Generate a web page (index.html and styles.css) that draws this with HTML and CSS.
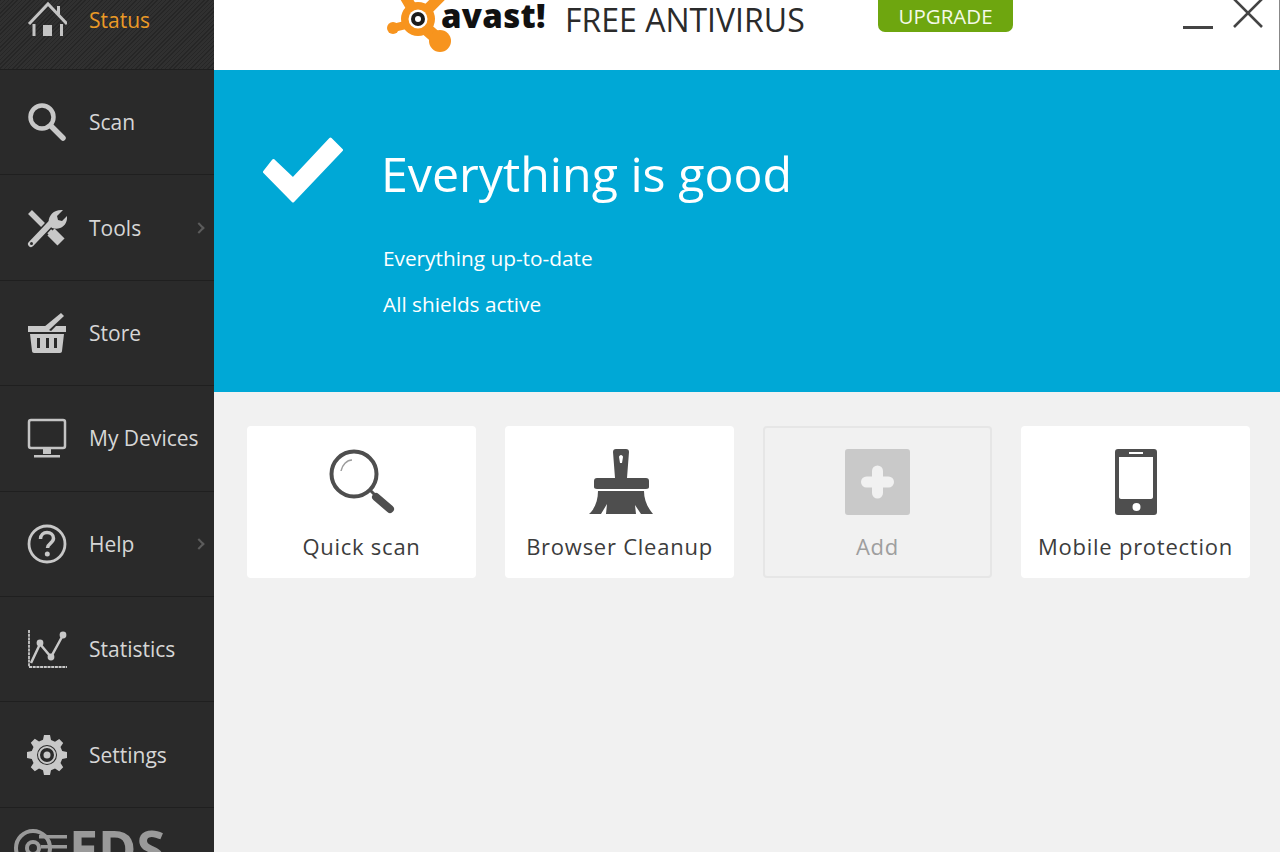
FILE: index.html
```html
<!DOCTYPE html>
<html lang="en">
<head>
<meta charset="utf-8">
<title>avast! Free Antivirus</title>
<link rel="stylesheet" href="styles.css">
</head>
<body>
<div class="app">
  <nav class="sidebar">
    <a class="nav-item nav-status">
      <svg class="nav-icon" viewBox="0 0 40 40"><path d="M2 24 21 4l19 20" fill="none" stroke="#c4c4c4" stroke-width="3"/><path d="M30 6h3v8h-3z" fill="#c4c4c4"/><path d="M5.500 24h3v12h-3zM33 24h3v12h-3zM16 25h9v11h-9z" fill="#c4c4c4"/></svg>
      <span class="nav-label nav-label-active">Status</span>
    </a>
    <a class="nav-item">
      <svg class="nav-icon" viewBox="0 0 40 40"><circle cx="15" cy="15" r="11.500" fill="none" stroke="#c8c8c8" stroke-width="4.500"/><path d="M25 25 36 36" stroke="#c8c8c8" stroke-width="5.500" stroke-linecap="round"/></svg>
      <span class="nav-label">Scan</span>
    </a>
    <a class="nav-item">
      <svg class="nav-icon" viewBox="0 0 40 40"><path d="M3 4 24 25" stroke="#c8c8c8" stroke-width="5.500"/><path d="M24 24 34 34" stroke="#c8c8c8" stroke-width="10"/><path d="M4 36 24 15" stroke="#2a2a2a" stroke-width="9"/><path d="M4 36 24 15" stroke="#c8c8c8" stroke-width="6" stroke-linecap="round"/><path d="M22 17c-2-8 4-16 14-15l-6 6 1 4 4 1 5-5c1 9-7 15-15 12z" fill="#c8c8c8"/><circle cx="4.500" cy="35.500" r="1.500" fill="#2a2a2a"/></svg>
      <span class="nav-label">Tools</span>
      <span class="nav-chevron"></span>
    </a>
    <a class="nav-item">
      <svg class="nav-icon" viewBox="0 0 40 40"><path d="M1 13h21l-2 3 4 2 5-5h10v6H1z" fill="#c8c8c8"/><path d="m17 14 17-14 3 3-16 15z" fill="#c8c8c8"/><path fill-rule="evenodd" d="M3 21h34l-2 17c0 1-1 2-2 2H7c-1 0-2-1-2-2zm7 4v10h3V25zm9 0v10h3V25zm8 0v10h3V25z" fill="#c8c8c8"/></svg>
      <span class="nav-label">Store</span>
    </a>
    <a class="nav-item">
      <svg class="nav-icon" viewBox="0 0 40 40"><rect x="2" y="2" width="36" height="28" rx="2" fill="none" stroke="#c4c4c4" stroke-width="2.500"/><path d="M16 31h8v5h-8z" fill="#c4c4c4"/><path d="M7 37h26v2.500H7z" fill="#c4c4c4"/></svg>
      <span class="nav-label">My Devices</span>
    </a>
    <a class="nav-item">
      <svg class="nav-icon" viewBox="0 0 40 40"><circle cx="20" cy="20" r="18" fill="none" stroke="#c8c8c8" stroke-width="2.800"/><path d="M13.500 15c0-4 3-6.500 6.500-6.500s6.500 2.300 6.500 5.800c0 5-6 5-6 9.700" fill="none" stroke="#c8c8c8" stroke-width="3.500"/><circle cx="20.300" cy="30" r="2.500" fill="#c8c8c8"/></svg>
      <span class="nav-label">Help</span>
      <span class="nav-chevron"></span>
    </a>
    <a class="nav-item">
      <svg class="nav-icon" viewBox="0 0 40 40"><path d="M2 1v37h38" fill="none" stroke="#c8c8c8" stroke-width="1.800" stroke-dasharray="3 .7"/><path d="M4 34 13 15l11 13L36 6" fill="none" stroke="#c8c8c8" stroke-width="2.500"/><circle cx="13" cy="14" r="3.400" fill="#c8c8c8"/><circle cx="24" cy="28" r="3.400" fill="#c8c8c8"/><circle cx="36" cy="6" r="3.400" fill="#c8c8c8"/></svg>
      <span class="nav-label">Statistics</span>
    </a>
    <a class="nav-item">
      <svg class="nav-icon" viewBox="0 0 40 40"><path fill-rule="evenodd" d="M17 0h6l1 5 4 1.700 4.200-2.700 4 4L33.500 12l1.700 4L40 17v6l-4.800 1-1.700 4 2.700 4.200-4 4L28 33.500l-4 1.700L23 40h-6l-1-4.800-4-1.700L7.800 36.200l-4-4L6.500 28l-1.700-4L0 23v-6l4.800-1 1.700-4L3.800 7.800l4-4L12 6.500l4-1.700zM20 10a10 10 0 1 0 0 20 10 10 0 0 0 0-20z" fill="#c8c8c8"/><circle cx="20" cy="20" r="8" fill="none" stroke="#c8c8c8" stroke-width="2"/><circle cx="20" cy="20" r="3.500" fill="#c8c8c8"/></svg>
      <span class="nav-label">Settings</span>
    </a>
    <div class="eds">
      <svg class="eds-mark" viewBox="0 0 56 40"><circle cx="20" cy="20" r="17" fill="none" stroke="#9a9a9a" stroke-width="4"/><circle cx="20" cy="20" r="6" fill="none" stroke="#9a9a9a" stroke-width="4"/><path d="M26 7h28v3.500H26zM28 17h26v3.500H28z" fill="#9a9a9a"/></svg>
      <span class="eds-text">EDS</span>
    </div>
  </nav>
  <div class="content">
    <header class="topbar">
      <div class="brand">
        <svg class="splat" viewBox="0 0 66 66"><g fill="none" stroke="#f7941e" stroke-linecap="round"><path d="M33 32 8 38" stroke-width="8"/><path d="M28 20 18 3" stroke-width="11"/><path d="M40 22 56 6" stroke-width="11"/><path d="M38 36 55 51" stroke-width="13"/></g><g fill="#f7941e"><circle cx="33" cy="29" r="17"/><circle cx="8" cy="38" r="6"/><circle cx="55" cy="51" r="11"/></g><circle cx="33" cy="29" r="9.500" fill="#fff"/><circle cx="33" cy="29" r="7" fill="#1c1c1c"/><circle cx="33" cy="29" r="3" fill="#fff"/></svg>
        <span class="brand-name">avast!</span>
      </div>
      <span class="product">FREE ANTIVIRUS</span>
      <a class="upgrade">UPGRADE</a>
      <div class="window-controls">
        <span class="minimize"></span>
        <svg class="close" viewBox="0 0 32 30"><path d="M2 -1 30 27M30 -1 2 27" stroke="#444" stroke-width="2.600" fill="none"/></svg>
      </div>
    </header>
    <section class="hero">
      <svg class="check" viewBox="0 0 82 66"><path d="M2.500 35 11.500 23.500 31 42 68.500 2 79.500 13 31 64z" fill="#fff" stroke="#fff" stroke-width="3" stroke-linejoin="round"/></svg>
      <div class="hero-text">
        <h1 class="hero-title">Everything is good</h1>
        <p class="hero-line">Everything up-to-date</p>
        <p class="hero-line">All shields active</p>
      </div>
    </section>
    <section class="cards">
      <a class="card">
        <svg class="card-icon" viewBox="0 0 66 66"><circle cx="25" cy="25" r="22.500" fill="none" stroke="#4e4e4e" stroke-width="4"/><path d="M12 22c1-6 6-11 11-11" fill="none" stroke="#9c9c9c" stroke-width="1.500"/><path d="M41 41 46 46" stroke="#4e4e4e" stroke-width="3"/><path d="M47 48 61 60" stroke="#4e4e4e" stroke-width="8" stroke-linecap="round"/></svg>
        <span class="card-label">Quick scan</span>
      </a>
      <a class="card">
        <svg class="card-icon" viewBox="0 0 66 66"><path fill-rule="evenodd" d="M26 3c0-2 1-3 3-3h10c2 0 3 1 3 3l-2 26h19c2 0 3 1 3 3v6c0 1-1 2-3 2H10c-2 0-3-1-3-2v-6c0-2 1-3 3-3h18zM34 6c-1 0-2 1-2 2l1 6h2l1-6c0-1-1-2-2-2z" fill="#4e4e4e"/><path d="M11 42h46c0 8 3 16 9 23H54l-6-9 1 9H19l1-10-6 10H2c6-5 9-14 9-23z" fill="#4e4e4e"/></svg>
        <span class="card-label">Browser Cleanup</span>
      </a>
      <a class="card card-disabled">
        <svg class="card-icon" viewBox="0 0 66 66"><rect width="65" height="66" rx="3" fill="#c9c9c9"/><path d="M32.500 22v22M21.500 33h22" stroke="#f1f1f1" stroke-width="11" stroke-linecap="round"/></svg>
        <span class="card-label">Add</span>
      </a>
      <a class="card">
        <svg class="card-icon" viewBox="0 0 66 66"><path fill-rule="evenodd" d="M15 0h36c2 0 3 1 3 3v60c0 2-1 3-3 3H15c-2 0-3-1-3-3V3c0-2 1-3 3-3zM16 8v40c0 1 1 2 2 2h30c1 0 2-1 2-2V8zM26 3v2h14V3zM33.500 54a4 4 0 1 0 0 8 4 4 0 0 0 0-8z" fill="#4e4e4e"/></svg>
        <span class="card-label">Mobile protection</span>
      </a>
    </section>
  </div>
</div>
</body>
</html>
```
FILE: styles.css
```css
html, body {
  margin: 0;
  height: 100%;
  overflow: hidden;
}
body {
  font-family: "Open Sans", "Liberation Sans", sans-serif;
  background: #f1f1f1;
}
.app {
  display: flex;
  height: 852px;
  overflow: hidden;
}
.sidebar {
  width: 214px;
  flex: none;
  background: #2a2a2a;
  display: flex;
  flex-direction: column;
  overflow: hidden;
}
.nav-item {
  flex: none;
  height: 104.4px;
  display: flex;
  align-items: center;
  gap: 22px;
  padding-left: 27px;
  padding-right: 8px;
  box-sizing: content-box;
  border-top: 1px solid #1f1f1f;
  color: #d6d6d6;
}
.nav-status {
  height: 40px;
  padding-bottom: 29px;
  border-top: 0;
  background: repeating-linear-gradient(135deg, #262626 0 1px, #303030 1px 3px);
}
.nav-icon {
  width: 40px;
  height: 40px;
  flex: none;
}
.nav-label {
  font-size: 21px;
  white-space: nowrap;
}
.nav-label-active {
  color: #eb9a26;
}
.nav-chevron {
  width: 6px;
  height: 6px;
  margin-left: auto;
  margin-right: 3px;
  border-top: 2px solid #5c5c5c;
  border-right: 2px solid #5c5c5c;
  transform: rotate(45deg);
}
.eds {
  border-top: 1px solid #1f1f1f;
  display: flex;
  align-items: flex-start;
  padding: 20px 0 0 13px;
  color: #9a9a9a;
  height: 60px;
}
.eds-mark {
  width: 56px;
  height: 40px;
  flex: none;
}
.eds-text {
  font-size: 52px;
  font-weight: 700;
  line-height: 40px;
}
.content {
  flex: 1;
  min-width: 0;
  display: flex;
  flex-direction: column;
}
.topbar {
  height: 70px;
  flex: none;
  background: #fff;
  display: flex;
  align-items: flex-start;
  padding-left: 171px;
  box-sizing: border-box;
  border-right: 1px solid #888;
}
.brand {
  display: flex;
  align-items: flex-start;
  height: 40px;
  width: 180px;
  flex: none;
}
.splat {
  width: 66px;
  height: 66px;
  margin-top: -10px;
  flex: none;
}
.brand-name {
  font-weight: 800;
  font-size: 33px;
  line-height: 32px;
  color: #111;
  letter-spacing: 0.3px;
  margin-left: -10px;
}
.product {
  font-size: 32px;
  line-height: 39px;
  color: #2b2b2b;
  white-space: nowrap;
  width: 313px;
  flex: none;
}
.upgrade {
  width: 135px;
  height: 32px;
  flex: none;
  background: #6ea60f;
  border-radius: 0 0 7px 7px;
  color: #f4f9e8;
  font-size: 20.500px;
  line-height: 33px;
  text-align: center;
}
.window-controls {
  display: flex;
  margin-left: 170px;
}
.minimize {
  width: 30px;
  height: 3px;
  background: #444;
  margin-top: 26px;
}
.close {
  width: 32px;
  height: 30px;
  margin-left: 19px;
}
.hero {
  height: 322px;
  flex: none;
  background: #00a8d6;
  display: flex;
  color: #fff;
  padding: 67px 0 0 48px;
  box-sizing: border-box;
}
.check {
  width: 82px;
  height: 66px;
  flex: none;
}
.hero-text {
  margin-left: 37px;
}
.hero-title {
  margin: 0;
  font-size: 48.300px;
  font-weight: 400;
  line-height: 72px;
  white-space: nowrap;
}
.hero-line {
  margin: 0;
  padding-left: 2px;
  font-size: 20.800px;
  line-height: 46px;
}
.hero-title + .hero-line {
  margin-top: 26px;
}
.cards {
  display: flex;
  gap: 29px;
  padding: 34px 30px 0 33px;
}
.card {
  width: 229px;
  height: 152px;
  box-sizing: border-box;
  background: #fff;
  border-radius: 4px;
  display: flex;
  flex-direction: column;
  align-items: center;
  padding-top: 23px;
  color: #3c3c3c;
}
.card-disabled {
  background: #f1f1f1;
  border: 2px solid #e6e6e6;
  padding-top: 21px;
  color: #9e9e9e;
}
.card-icon {
  width: 66px;
  height: 66px;
  flex: none;
}
.card-label {
  font-size: 22px;
  line-height: 30px;
  letter-spacing: 0.75px;
  margin-top: 16px;
  white-space: nowrap;
}
```
